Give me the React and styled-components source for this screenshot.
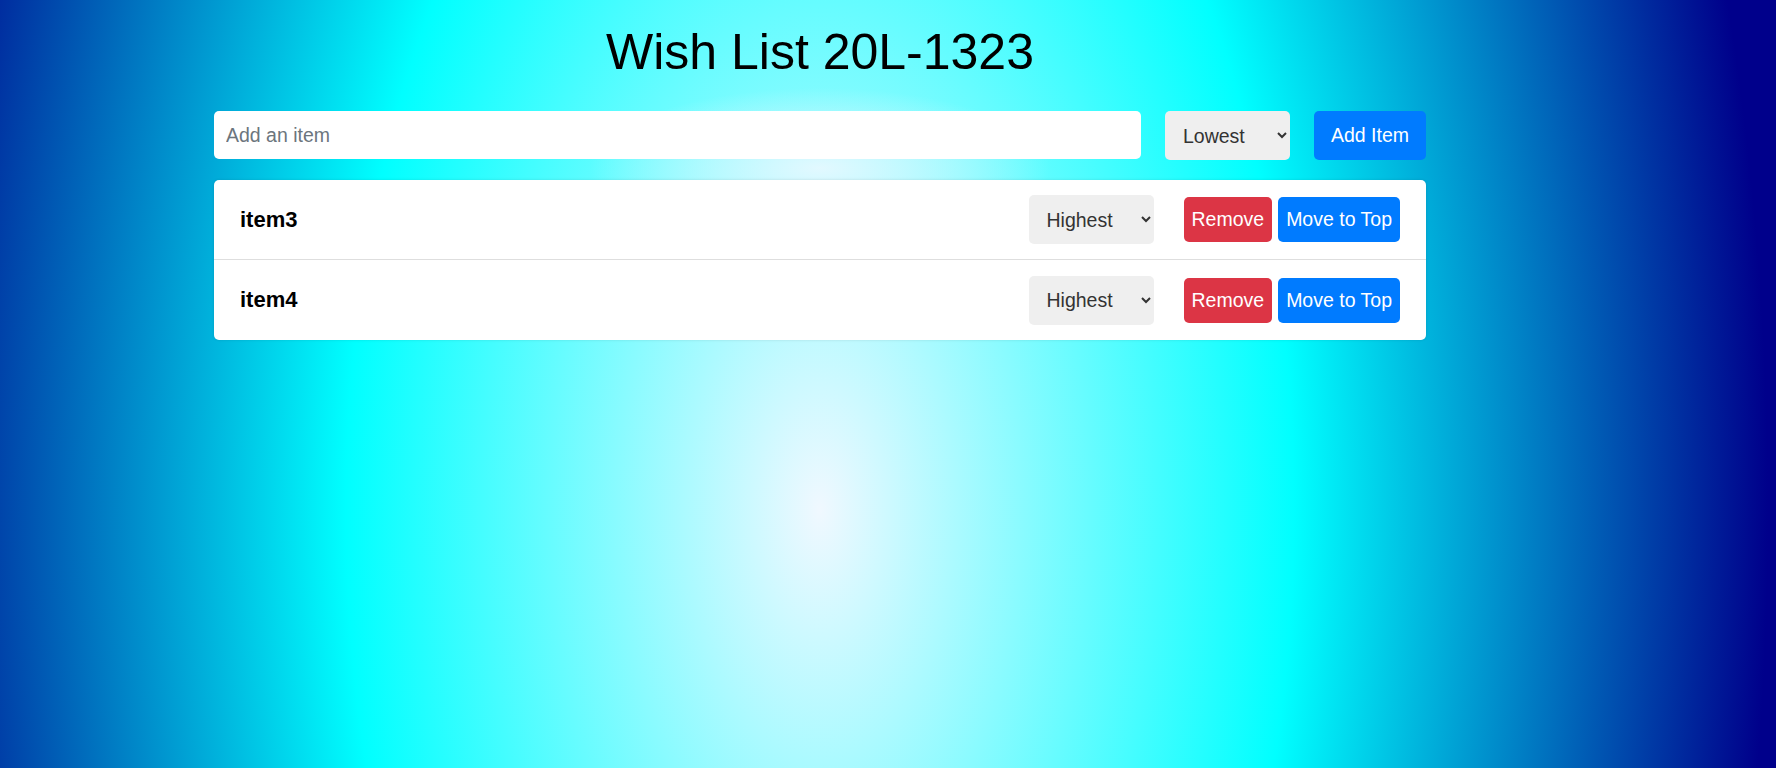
import React, { useState } from 'react';
import styled, { createGlobalStyle } from 'styled-components';

const GlobalStyle = createGlobalStyle`
  html, body {
    margin: 0;
    padding: 0;
  }
  body {
    font-family: "Liberation Sans", Arial, sans-serif;
    background: darkblue;
  }
`;

const Page = styled.div`
  min-height: 100vh;
  box-sizing: border-box;
  padding: 23px 136px 40px 0;
  background:
    radial-gradient(
      ellipse 230px 80px at 820px 168px,
      rgba(240, 248, 255, 0.85),
      rgba(240, 248, 255, 0)
    ),
    radial-gradient(
      ellipse 948px 1764px at 820px 510px,
      aliceblue 0%,
      cyan 50%,
      darkblue 100%
    );
`;

const Container = styled.div`
  width: 1212px;
  margin: 0 auto;
`;

const Title = styled.h1`
  margin: 0 0 30px;
  font-size: 50px;
  font-weight: normal;
  text-align: center;
  color: #000;
`;

const AddRow = styled.form`
  display: flex;
  align-items: flex-start;
  gap: 24px;
  margin-bottom: 20px;
`;

const ItemInput = styled.input`
  flex: 1;
  height: 48px;
  box-sizing: border-box;
  padding: 0 12px;
  border: none;
  border-radius: 5px;
  background: #fff;
  font-family: inherit;
  font-size: 19.5px;
  outline: none;

  &::placeholder {
    color: #6c757d;
  }
`;

const PrioritySelect = styled.select`
  width: 125px;
  height: 49px;
  box-sizing: border-box;
  padding: 0 10px 0 14px;
  border: none;
  border-radius: 5px;
  background-color: #efefef;
  color: #333;
  font-family: inherit;
  font-size: 19.5px;
`;

const Button = styled.button`
  height: ${(p) => p.$height || 45}px;
  padding: 0 ${(p) => p.$padX || 8}px;
  border: none;
  border-radius: 5px;
  background: ${(p) => (p.$variant === 'danger' ? '#dc3545' : '#007bff')};
  color: #fff;
  font-family: inherit;
  font-size: 19.5px;
  cursor: pointer;
`;

const List = styled.ul`
  list-style: none;
  margin: 0;
  padding: 0;
  background: #fff;
  border-radius: 5px;
  box-shadow: 0 0 3px rgba(0, 0, 0, 0.12);
`;

const Row = styled.li`
  display: flex;
  align-items: center;
  height: 80px;
  box-sizing: border-box;
  padding: 0 26px;
  border-bottom: ${(p) => (p.$last ? 'none' : '1px solid #dedede')};
`;

const ItemName = styled.span`
  flex: 1;
  font-size: 22px;
  font-weight: bold;
  color: #000;
`;

const Actions = styled.div`
  display: flex;
  align-items: center;
  gap: 6px;
  margin-left: 30px;
`;

const initialItems = [
  { id: 3, name: 'item3', priority: 'Highest' },
  { id: 4, name: 'item4', priority: 'Highest' },
];

const priorities = ['Highest', 'High', 'Medium', 'Low', 'Lowest'];

const App = () => {
  const [items, setItems] = useState(initialItems);
  const [text, setText] = useState('');
  const [priority, setPriority] = useState('Lowest');

  const addItem = (e) => {
    e.preventDefault();
    if (!text.trim()) return;
    setItems([...items, { id: Date.now(), name: text, priority }]);
    setText('');
  };

  const remove = (id) => setItems(items.filter((i) => i.id !== id));

  const moveToTop = (id) => {
    const item = items.find((i) => i.id === id);
    setItems([item, ...items.filter((i) => i.id !== id)]);
  };

  const changePriority = (id, value) =>
    setItems(items.map((i) => (i.id === id ? { ...i, priority: value } : i)));

  return (
    <>
      <GlobalStyle />
      <Page>
        <Container>
          <Title>Wish List 20L-1323</Title>
          <AddRow onSubmit={addItem}>
            <ItemInput
              placeholder="Add an item"
              value={text}
              onChange={(e) => setText(e.target.value)}
            />
            <PrioritySelect
              value={priority}
              onChange={(e) => setPriority(e.target.value)}
            >
              {priorities.map((p) => (
                <option key={p}>{p}</option>
              ))}
            </PrioritySelect>
            <Button type="submit" $height={49} $padX={17}>
              Add Item
            </Button>
          </AddRow>
          <List>
            {items.map((item, idx) => (
              <Row key={item.id} $last={idx === items.length - 1}>
                <ItemName>{item.name}</ItemName>
                <PrioritySelect
                  value={item.priority}
                  onChange={(e) => changePriority(item.id, e.target.value)}
                >
                  {priorities.map((p) => (
                    <option key={p}>{p}</option>
                  ))}
                </PrioritySelect>
                <Actions>
                  <Button $variant="danger" onClick={() => remove(item.id)}>
                    Remove
                  </Button>
                  <Button onClick={() => moveToTop(item.id)}>Move to Top</Button>
                </Actions>
              </Row>
            ))}
          </List>
        </Container>
      </Page>
    </>
  );
};

export default App;
